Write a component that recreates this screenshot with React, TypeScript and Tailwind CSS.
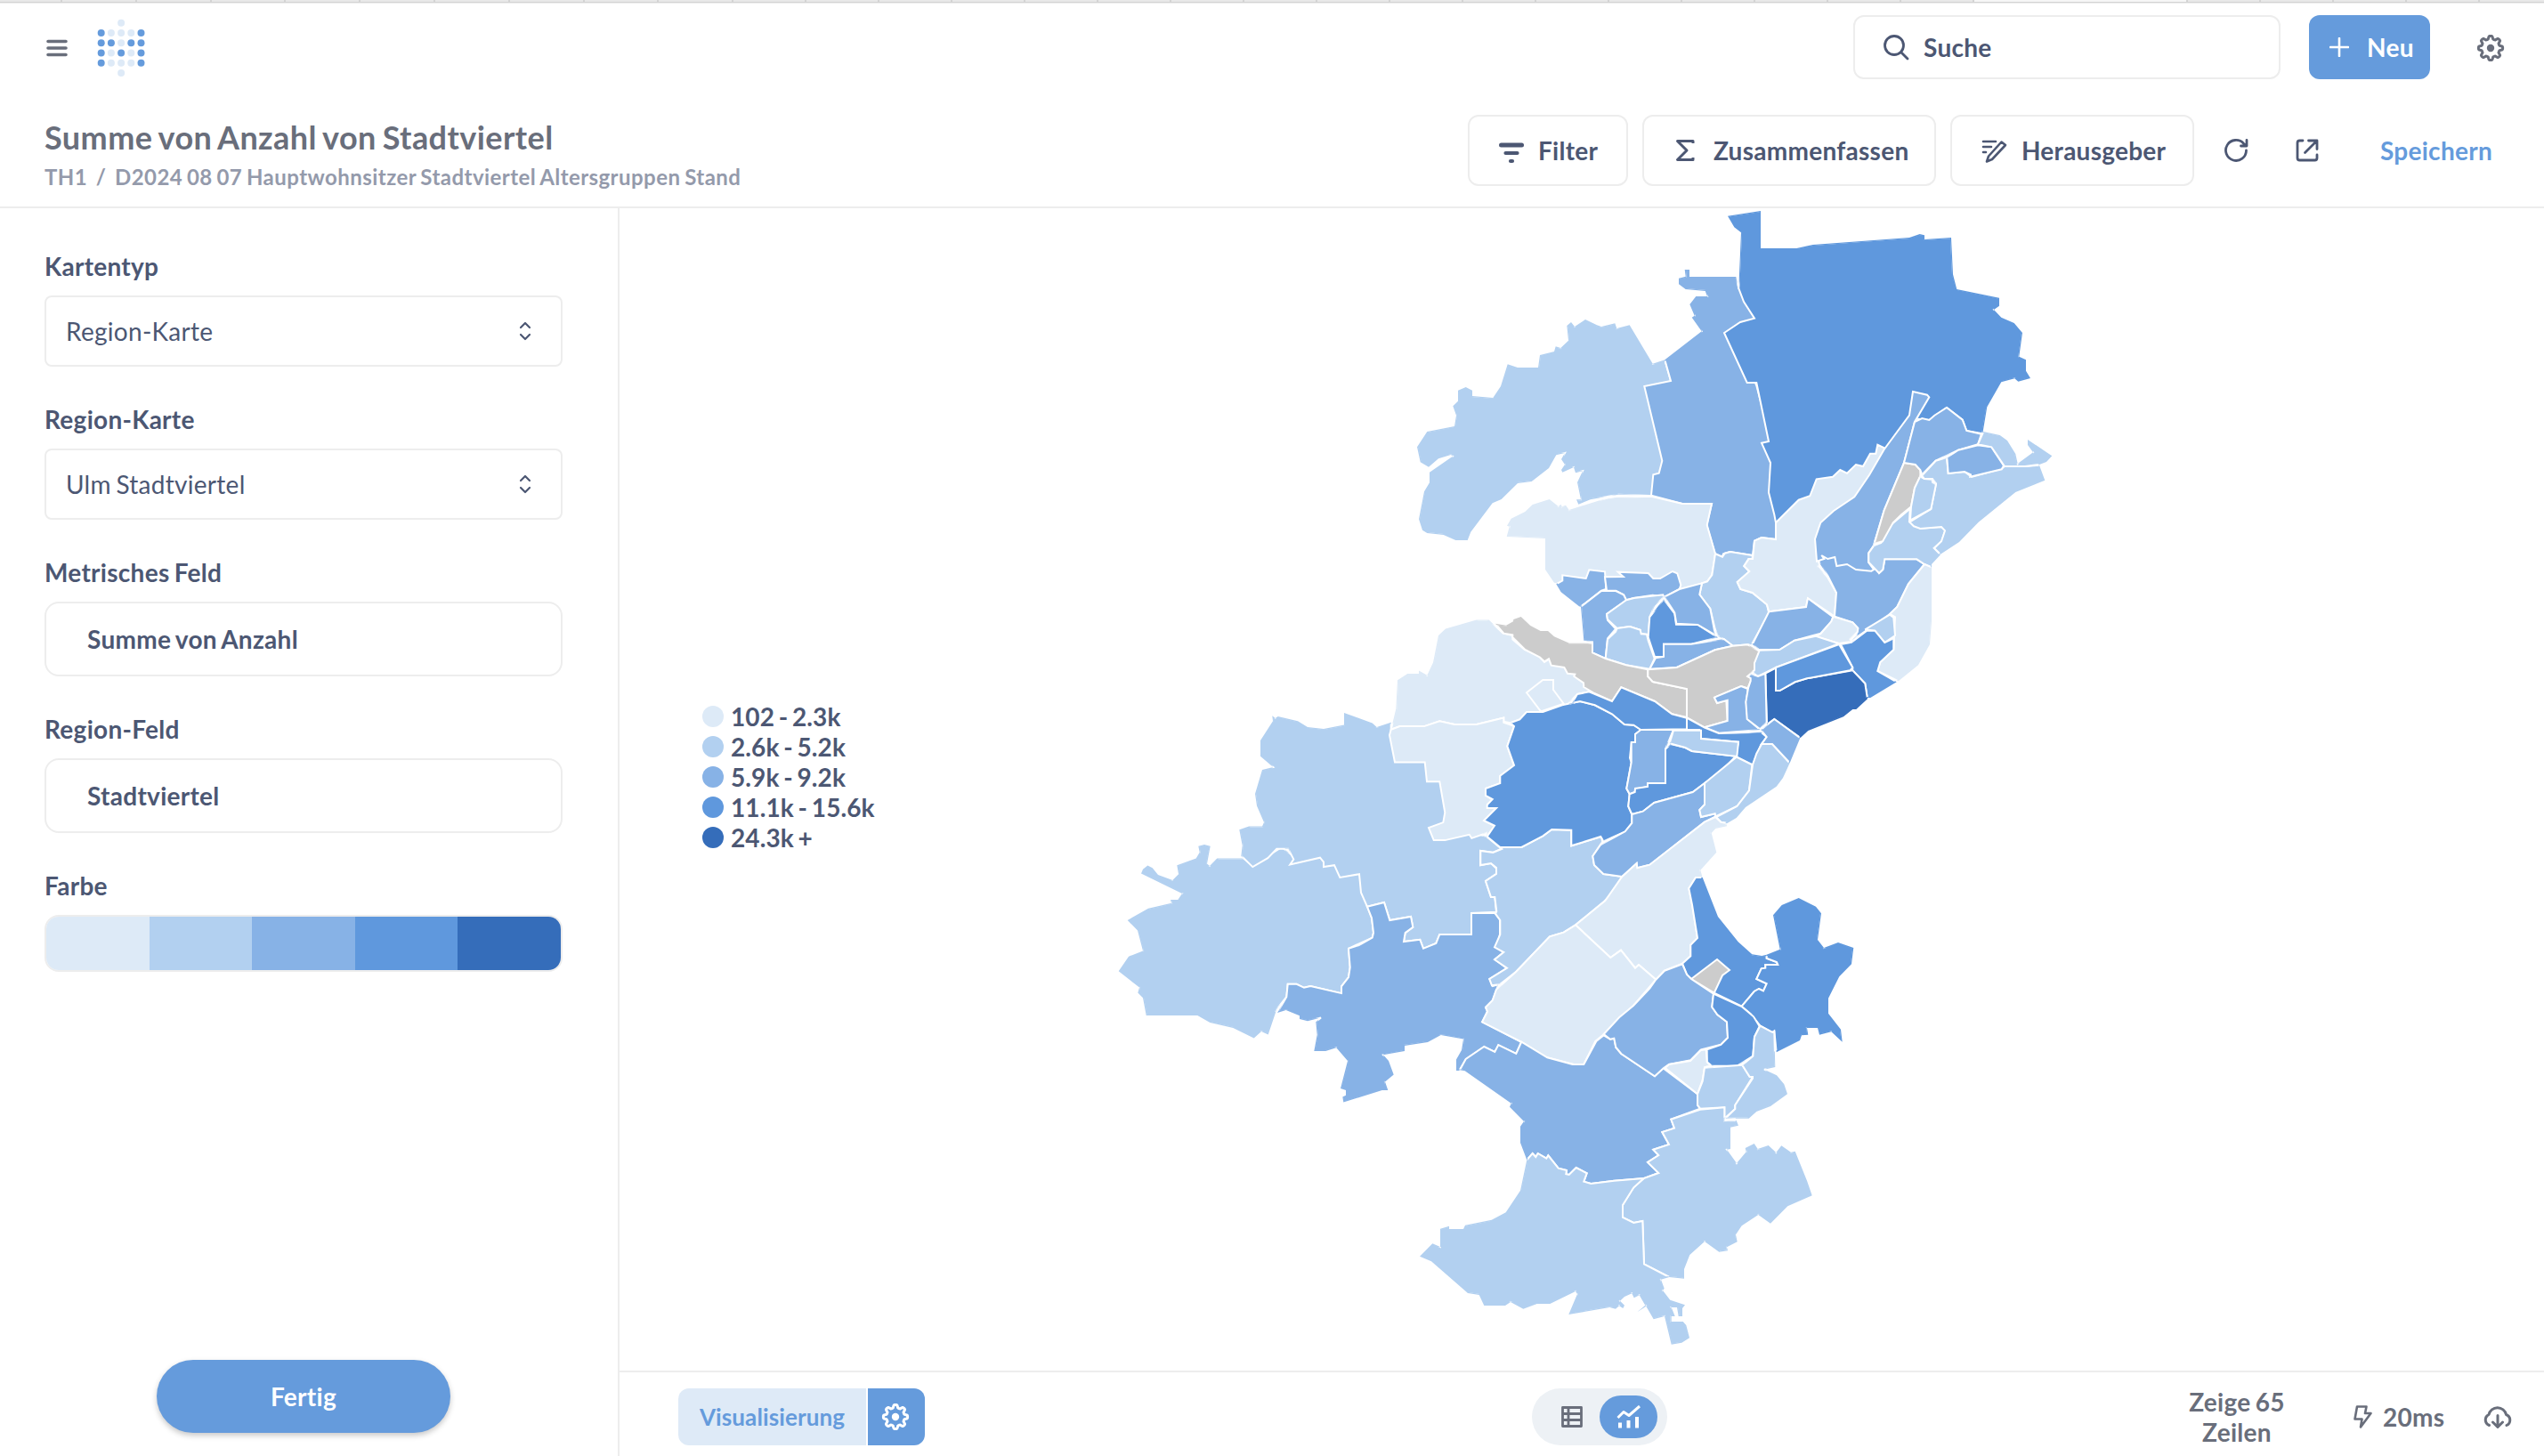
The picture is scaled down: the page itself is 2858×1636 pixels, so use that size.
import type { ReactNode } from "react";

/* ---------- Icons ---------- */

const gearPath = (() => {
  const pts: string[] = [];
  for (let i = 0; i < 96; i++) {
    const a = (i / 96) * Math.PI * 2;
    const w = Math.cos(a * 8);
    const r = 11.9 + 1.7 * Math.max(-1, Math.min(1, w * 1.7));
    pts.push(`${(16 + r * Math.sin(a)).toFixed(2)},${(16 - r * Math.cos(a)).toFixed(2)}`);
  }
  return `M${pts.join("L")}Z`;
})();

const Gear = ({ className = "" }: { className?: string }) => (
  <svg viewBox="0 0 32 32" className={`size-8 ${className}`} fill="none" stroke="currentColor" strokeWidth="3">
    <path d={gearPath} strokeLinejoin="round" />
    <circle cx="16" cy="16" r="4.2" fill="currentColor" stroke="none" />
  </svg>
);

const LOGO = ["..o..", "xooox", "xxoxx", "xoxox", "xooox", "..o.."];
const Logo = () => (
  <svg width="54" height="66" viewBox="0 0 54 66">
    {LOGO.flatMap((row, y) =>
      row.split("").map((c, x) =>
        c === "." ? null : (
          <circle key={`${x}-${y}`} cx={4.7 + x * 11.2} cy={4.7 + y * 11.25} r="4" fill={c === "x" ? "#659bdc" : "#deeaf7"} />
        ),
      ),
    )}
  </svg>
);

/* ---------- Map data ---------- */

// Each survey sheet: x/y origin of its corner and units per pixel on both axes.
const SHEETS: Record<string, [number, number, number, number]> = {
  A: [1580, 220, 3, 3],
  B: [1900, 220, 3, 3],
  C: [1680, 560, 3, 3],
  D: [1940, 560, 3, 3],
  E: [1240, 680, 3, 2.7034],
  F: [1640, 800, 3, 3],
  G: [1580, 1100, 3, 3],
};

const COLORS = ["#cccccc", "#ddeaf7", "#b2d0f0", "#87b2e6", "#5f98dd", "#356dba"];

// [colour class, outline]. A letter switches the sheet for the points that follow.
const REGIONS: [number, string][] = [
  [2, "A 36,847 70,795 162,777 168,740 157,709 174,692 174,656 200,645 222,656 222,675 292,681 318,642 341,568 375,579 444,579 450,537 498,525 503,508 520,513 546,488 541,438 555,426 567,441 603,417 642,436 657,441 703,430 709,447 752,436 830,566 871,553 891,624 860,660 880,900 840,1012 715,1007 620,1024 580,1040 573,1024 588,1024 576,966 594,928 570,934 564,915 526,932 522,924 534,906 522,888 534,867 505,874 480,918 422,963 375,969 320,1023 290,1036 217,1133 206,1161 166,1161 125,1143 70,1137 54,1127 42,1090 60,997 78,967 78,932 156,878 150,873 108,886 75,914 47,898"],
  [3, "A 938,249 954,249 954,273 1111,273 1120,312 B 200,360 230,413 150,470 220,640 270,830 290,900 285,1158 237,1152 213,1163 207,1212 130,1200 108,1207 104,1217 80,1206 52,1110 69,1038 A 930,1038 825,1010 832,940 851,935 862,893 802,642 891,624 871,553 995,457 962,410 971,404 955,366 976,339 1014,339 1007,321 941,315 918,298 918,278 941,272"],
  [4, "B 123,68 234,51 234,177 355,177 410,165 735,141 770,129 786,133 786,147 876,141 882,265 895,315 1038,344 1038,371 1020,384 1045,410 1088,429 1116,462 1105,542 1128,553 1128,590 1143,615 1102,626 1090,616 1045,628 997,712 982,802 928,792 914,755 861,714 802,756 765,752 740,800 550,1010 430,1060 285,1102 280,1075 261,1000 267,900 237,833 261,828 220,630 188,630 111,462 165,426 213,413 177,357 160,312 168,124 145,106"],
  [1, "A 338,1149 347,1115 339,1112 353,1088 400,1065 425,1041 482,1023 512,1047 521,1040 524,1048 537,1043 548,1059 680,1018 825,1013 930,1038 1029,1038 1013,1110 C 741,187 730,258 714,280 694,288 560,330 373,300 285,300 226,290 198,284 168,240 168,135"],
  [3, "C 205,289 226,277 226,259 305,270 316,241 369,247 373,306 357,311 287,365 282,364 221,316"],
  [3, "C 369,265 431,264 413,248 515,252 532,270 555,270 597,246 613,253 625,292 620,306 570,332 530,326 465,336 441,343 432,325 406,311 375,311"],
  [3, "C 288,365 357,312 406,312 432,325 441,343 375,390 378,410 405,440 378,472 371,540 327,520 327,484 298,479"],
  [2, "C 441,343 467,336 565,325 567,333 537,362 520,400 515,460 490,455 488,443 453,432 410,438 378,408 375,390"],
  [2, "C 410,438 453,432 488,443 491,457 510,458 515,480 536,540 520,575 440,562 371,540 378,475 405,450"],
  [2, "C 741,187 765,197 773,185 792,180 866,192 866,204 853,204 838,228 856,247 815,282 826,306 866,318 915,358 922,388 864,492 850,493 800,497 770,474 750,465 740,440 724,372 688,324 696,286 714,280 730,258"],
  [4, "C 567,340 604,388 609,425 682,426 750,469 660,491 567,491 567,534 537,534 515,468 520,400"],
  [3, "C 570,332 620,306 696,286 688,324 724,372 737,440 740,460 682,426 610,422 604,385"],
  [3, "C 567,491 660,491 770,474 800,497 740,511 611,570 520,575 540,538 567,534"],
  [1, "B 285,1102 362,1025 400,1012 422,955 477,947 502,924 525,935 555,906 579,912 603,869 622,869 628,839 650,850 660,870 600,1000 500,1090 440,1200 D 307,230 339,265 369,318 363,398 273,337 267,366 142,382 135,358 86,318 46,306 35,282 76,246 58,228 74,204 87,204 93,143 117,132 165,138 165,82"],
  [3, "D 309,213 330,190 500,230 513,252 526,240 532,205 640,205 666,222 612,288 574,366 549,390 420,480 436,462 442,440 424,418 363,398 369,318 340,260"],
  [3, "B 747,660 795,671 802,679 753,762 717,900 650,1060 614,1180 597,1205 597,1235 D 495,240 487,245 435,240 405,222 370,228 364,198 340,204 319,192 328,204 303,212 297,137 316,82 B 480,1062 550,1015 600,941 650,855 735,740"],
  [3, "D 142,382 267,366 273,337 358,400 352,415 316,455 228,479 178,510 108,510 86,492"],
  [1, "D 363,400 424,418 442,437 440,450 415,475 418,483 378,489 300,466 316,457 352,415 358,400"],
  [2, "D 108,512 178,510 228,479 300,464 378,490 165,570 105,600 90,590 93,552"],
  [2, "D 495,160 520,150 555,88 617,35 615,78 640,95 652,101 724,96 736,108 724,144 698,167 720,190 690,222 690,232 666,222 640,205 532,205 526,240 513,252 478,215 478,184"],
  [0, "B 717,900 755,906 772,924 772,945 753,985 741,1048 708,1075 680,1102 645,1165 617,1172 650,1060"],
  [3, "B 753,762 778,750 802,756 820,740 861,714 914,755 928,792 978,803 966,838 900,857 824,893 778,940 772,924 755,906 717,900"],
  [2, "B 778,943 824,893 861,882 866,936 921,930 945,948 1046,920 1056,912 1125,912 1173,908 1192,959 1093,999 968,1100 903,1167 840,1208 819,1188 843,1165 855,1129 843,1116 772,1122 750,1114 736,1100 808,1056 825,970 813,954 785,954"],
  [2, "B 778,950 785,954 811,956 813,966 825,972 808,1056 738,1094 741,1048 753,985 772,945"],
  [3, "B 862,882 900,857 966,841 1012,847 1053,910 1046,922 940,947 942,940 921,930 866,936"],
  [2, "B 966,838 985,795 1040,807 1065,825 1093,870 1100,903 1152,865 1134,840 1134,822 1216,877 1197,897 1173,906 1125,912 1056,912 1012,847"],
  [1, "D 666,222 690,232 690,415 684,492 645,562 578,616 508,582 517,552 562,510 567,400 549,390 574,366 612,288"],
  [2, "D 466,442 549,392 562,402 567,462 532,486 499,446"],
  [4, "D 384,492 420,485 472,446 499,446 532,486 562,472 562,510 517,552 508,582 572,619 484,672 473,672 466,624 424,580 424,570"],
  [5, "D 130,590 165,572 165,648 178,648 230,619 270,607 424,580 466,624 474,676 436,711 424,711 393,736 274,783 248,807 160,744 135,762"],
  [4, "D 165,570 378,492 424,570 415,580 270,607 230,619 178,648 165,648"],
  [1, "E 968,378 985,315 990,228 1024,208 1062,208 1062,199 1090,213 1110,174 1128,92 1152,72 1256,45 1298,45 1345,85 1377,92 1378,104 1418,135 1468,155 C 165,552 200,530 260,580 320,640 316,652 276,660 243,695 160,722 105,722 82,747 50,757 28,752 E 1348,342 1256,362 1182,362 1132,352 1080,368 998,368"],
  [0, "C 0,422 36,428 60,415 61,408 86,399 118,429 152,447 177,447 198,466 249,488 327,488 327,520 371,540 440,562 514,577 514,600 530,618 645,642 645,738 595,727 537,684 424,637 393,684 330,655 298,636 297,622 265,600 268,593 243,590 232,570 188,563 180,541 165,550 150,536 100,510 58,468 58,460 28,455"],
  [0, "C 800,497 850,493 889,515 873,555 873,578 850,600 861,606 861,615 850,640 828,633 738,671 747,690 778,680 782,750 705,772 645,738 645,642 530,618 514,600 514,577 611,570 740,511"],
  [3, "C 738,671 828,633 851,642 845,686 850,744 892,780 753,791 705,772 782,750 782,680 747,690"],
  [3, "D 70,600 82,592 105,600 130,590 134,755 112,778 68,744 64,686 72,640 80,615 80,606"],
  [1, "C 105,655 160,612 195,612 195,645 230,692 155,718 150,714"],
  [2, "E 80,957 150,921 228,905 225,895 250,895 264,876 126,815 132,802 148,791 164,798 183,819 232,835 252,817 247,790 311,769 323,751 319,732 339,727 359,732 348,785 357,792 382,769 471,769 502,790 600,735 650,770 740,765 860,810 888,916 903,950 909,995 905,1010 860,1028 825,1043 830,1100 825,1130 801,1158 801,1179 697,1157 675,1162 650,1151 620,1151 616,1190 583,1227 554,1304 531,1295 506,1315 436,1284 358,1268 316,1246 143,1246 132,1193 115,1177 120,1161 50,1112 84,1067 132,1050 114,988"],
  [2, "E 968,356 920,370 905,358 810,327 810,364 741,376 687,370 654,352 587,338 578,343 568,336 570,352 528,411 528,459 571,492 534,500 510,573 516,610 540,660 534,672 489,672 457,682 467,730 463,762 471,768 502,795 553,768 583,740 622,740 640,772 628,788 729,767 741,780 741,795 777,790 796,827 861,817 867,873 888,916 945,903 964,957 1035,946 1042,978 1016,995 1011,1022 1066,1016 1077,1043 1120,1027 1132,1000 1239,1000 1239,935 1323,932 1318,887 1305,887 1287,838 1323,816 1323,800 1305,784 1269,790 1269,746 1311,751 1340,740 1290,703 1200,680 1200,480 1040,400 968,395"],
  [3, "E 888,916 945,903 964,957 1035,946 1042,978 1016,995 1011,1022 1066,1016 1077,1043 1120,1027 1132,1000 1239,1000 1239,935 1318,935 1335,955 1335,1000 1325,1038 1348,1054 1318,1076 1358,1103 1300,1136 1311,1157 1330,1152 1325,1165 1311,1200 1287,1222 1293,1233 1276,1266 1407,1327 1390,1362 1330,1337 1318,1357 1282,1342 1220,1380 1198,1414 1188,1414 1188,1380 1206,1352 1212,1318 1136,1306 1092,1327 1014,1338 1014,1354 942,1366 960,1384 977,1426 948,1448 958,1473 938,1473 808,1510 805,1494 816,1489 816,1473 798,1468 822,1384 784,1344 748,1354 709,1354 719,1305 715,1266 732,1253 687,1263 660,1257 660,1247 614,1230 585,1238 616,1190 620,1151 650,1151 675,1162 697,1157 801,1179 801,1158 825,1130 830,1100 825,1043 860,1033 905,1010 909,995 903,950"],
  [1, "E 968,378 998,368 1080,368 1132,352 1182,362 1256,362 1348,342 1348,356 1383,368 1360,429 1383,487 1336,519 1336,542 1287,557 1287,578 1311,591 1293,605 1293,616 1323,616 1282,655 1318,671 1290,703 1290,692 1240,708 1232,697 1150,714 1112,714 1095,676 1144,660 1150,630 1132,536 1089,536 1082,477 981,477 963,395"],
  [2, "F 136,456 208,456 280,418 310,396 376,398 376,451 478,420 480,438 448,486 453,516 484,546 547,555 510,615 485,640 390,718 350,743 303,757 190,875 135,918 108,922 100,900 159,863 117,835 148,810 117,793 136,750 136,702 120,680 124,672 118,624 105,624 87,570 123,546 123,525 105,510 70,516 70,468 112,474 142,462"],
  [4, "C 50,757 82,745 105,720 160,720 225,697 285,684 335,697 393,727 435,762 466,764 492,780 F 591,75 591,102 578,105 573,155 578,170 562,258 572,277 568,318 580,345 580,375 557,403 484,436 475,420 376,451 376,398 310,396 280,418 208,456 136,456 92,420 117,383 81,366 123,324 92,324 92,313 110,294 87,282 87,258 136,240 136,215 183,180 160,115 183,48"],
  [4, "C 258,690 276,660 316,652 393,684 424,637 537,684 595,727 645,740 645,778 490,780 466,764 435,762 393,727 335,697 285,684"],
  [3, "F 591,102 591,75 610,60 720,60 693,125 693,240 633,240 633,252 591,260 590,270 572,277 562,258 578,170 578,102"],
  [4, "F 711,108 760,120 782,132 930,149 885,195 825,240 785,270 655,306 617,335 580,345 568,318 572,277 590,270 591,258 633,252 633,240 693,240 693,125"],
  [4, "F 765,20 825,53 873,72 1015,68 1034,84 1015,110 987,178 930,150 939,101 813,90 808,60 765,60"],
  [2, "F 720,62 813,62 813,90 939,101 934,150 782,132 760,120 707,106"],
  [3, "F 580,345 617,335 655,306 785,270 825,240 825,312 808,330 813,354 860,343 862,352 825,371 640,515 598,526 596,510 547,555 484,546 453,516 448,486 475,447 557,403 580,375"],
  [2, "F 825,240 932,152 985,178 975,265 934,318 862,352 860,343 813,354 808,330 825,312"],
  [2, "F 1018,107 1053,108 1112,172 1089,222 1067,251 963,321 932,357 900,376 880,371 864,354 934,318 975,265 987,178 1000,140"],
  [3, "F 1060,24 1147,88 1112,172 1053,108 1018,107 1034,84 1015,60"],
  [1, "F 547,555 596,510 598,526 640,515 825,371 862,354 880,371 897,374 900,385 862,393 848,408 865,473 811,533 818,558 795,558 772,595 783,650 801,762 778,785 778,823 750,848 690,872 661,902 603,852 591,863 543,803 508,828 390,718 490,636"],
  [1, "F 390,718 508,828 543,803 591,863 603,852 661,902 585,990 487,1085 457,1110 418,1188 385,1188 292,1164 207,1112 75,1045 93,1010 87,995 110,972 123,935 190,875 303,757 350,743"],
  [4, "F 795,558 818,558 870,690 938,775 985,817 1018,822 1034,818 1034,830 1068,843 1072,852 1030,852 1030,863 1016,865 1000,900 1034,916 1023,940 1008,933 992,942 950,992 857,947 780,900 765,885 750,848 778,823 778,785 801,762 783,650 772,595"],
  [4, "F 1034,818 1079,800 1056,685 1085,651 1142,627 1200,656 1218,679 1206,768 1227,795 1275,777 1327,795 1320,850 1279,892 1242,965 1242,1016 1284,1070 1289,1112 1252,1078 1212,1088 1206,1065 1170,1065 1174,1088 1152,1090 1146,1107 1067,1147 1060,1075 1053,1080 1012,1057 980,1018 950,992 992,942 1008,933 1023,940 1034,916 1000,900 1016,865 1030,863 1030,852 1072,852 1068,843 1034,830"],
  [0, "F 780,900 867,834 909,870 885,888 857,947"],
  [3, "G 180,307 200,270 262,228 298,246 310,222 370,252 388,212 475,265 560,288 598,288 640,210 665,190 687,203 700,200 706,230 724,252 837,328 865,301 981,388 981,425 990,437 892,473 903,503 862,516 885,558 832,575 850,594 813,618 850,654 800,672 700,680 622,690 598,683 608,655 572,636 548,660 538,658 540,645 512,638 478,595 472,605 443,588 436,600 425,588 406,610 384,552 384,497 396,480 348,431 353,419 197,310"],
  [3, "F 750,850 765,885 780,900 855,950 850,993 868,1020 900,1045 903,1098 880,1121 813,1138 778,1174 705,1188 G 867,300 837,328 724,252 706,230 700,200 687,203 665,186 F 537,1030 585,990 640,932 661,902 690,872"],
  [4, "G 1035,50 1130,93 1170,127 1190,160 1173,195 1168,260 1115,293 1030,293 1013,280 1013,238 1060,222 1083,198 1080,145 1048,120 1030,95"],
  [1, "G 872,300 885,288 957,276 992,240 1010,238 1013,280 1024,292 1005,298 998,340 981,388"],
  [2, "G 1005,299 1132,290 1157,330 1167,330 1108,425 1108,438 1072,470 1072,433 990,437 981,425 981,388 998,345"],
  [2, "G 1132,290 1168,260 1173,195 1192,158 1234,180 1240,178 1243,297 1206,305 1248,325 1273,355 1284,388 1227,429 1180,447 1154,470 1075,470 1108,438 1108,425 1167,335 1167,330 1157,330"],
  [2, "G 892,473 990,440 1072,433 1072,480 1112,477 1119,494 1092,500 1092,573 1080,575 1113,621 1145,583 1142,570 1172,555 1184,573 1220,561 1246,585 1264,562 1296,584 1310,581 1350,680 1367,730 1285,766 1227,824 1186,795 1130,832 1110,862 1115,886 1080,904 1083,916 1054,920 1005,885 955,930 936,978 936,1010 886,1005 801,961 796,816 766,822 729,804 729,762 766,703 800,672 850,654 813,618 850,594 832,575 885,558 862,516 903,503"],
  [2, "G 406,610 425,588 436,600 443,588 472,605 478,595 512,638 540,645 538,658 548,660 572,636 608,655 598,683 622,690 700,680 800,672 766,703 729,762 729,804 766,822 796,816 801,961 886,1005 858,1013 869,1043 864,1050 889,1082 939,1099 930,1110 930,1137 917,1137 912,1107 893,1107 905,1137 893,1137 893,1155 932,1155 943,1167 954,1210 928,1226 893,1232 870,1137 833,1147 808,1103 778,1123 805,1100 785,1066 767,1075 760,1060 735,1071 720,1085 735,1100 730,1110 717,1102 705,1112 685,1107 547,1131 576,1062 570,1053 484,1095 440,1095 394,1112 351,1089 333,1101 262,1101 245,1065 207,1059 84,952 45,935 88,892 114,903 114,842 144,833 144,843 192,843 198,830 287,812 335,787 384,713"],
];

function toPoints(outline: string) {
  let sheet = SHEETS.A;
  const out: string[] = [];
  for (const token of outline.split(" ")) {
    if (SHEETS[token]) {
      sheet = SHEETS[token];
      continue;
    }
    const [x, y] = token.split(",").map(Number);
    out.push(`${(sheet[0] + x / sheet[2]).toFixed(1)},${(sheet[1] + y / sheet[3]).toFixed(1)}`);
  }
  return out.join(" ");
}

const SHAPES = REGIONS.map(([c, outline]) => ({ fill: COLORS[c], points: toPoints(outline) }));

// White borders are drawn between regions only; the mask keeps them off the outer edge.
const RegionMap = () => (
  <svg className="block h-[1306px] w-[2162px]" viewBox="696 234 2162 1306">
    <defs>
      <filter id="shrink" filterUnits="userSpaceOnUse" x="696" y="234" width="2162" height="1306">
        <feMorphology operator="erode" radius="2" />
      </filter>
      <mask id="inside" maskUnits="userSpaceOnUse" x="696" y="234" width="2162" height="1306">
        <g filter="url(#shrink)">
          {SHAPES.map((s, i) => (
            <polygon key={i} points={s.points} fill="#fff" stroke="#fff" strokeWidth="2" strokeMiterlimit="3" />
          ))}
        </g>
      </mask>
    </defs>
    <g>
      {SHAPES.map((s, i) => (
        <polygon key={i} points={s.points} fill={s.fill} />
      ))}
    </g>
    <g mask="url(#inside)">
      {SHAPES.map((s, i) => (
        <polygon key={i} points={s.points} fill={s.fill} stroke="#fff" strokeWidth="2" strokeMiterlimit="3" />
      ))}
    </g>
  </svg>
);

/* ---------- Layout pieces ---------- */

const TABS_LEFT = Array.from({ length: 9 });
const TABS_MID = Array.from({ length: 17 });
const TABS_RIGHT = Array.from({ length: 4 });

const TabStrip = () => (
  <div className="flex h-1 shrink-0 border-b border-[#ececec]">
    <div className="flex h-[3px] w-full border-b border-[#d4d4d4] bg-[#e8e8e8]">
      <div className="w-[70px] shrink-0 border-r-2 border-[#d4d4d4]" />
      {TABS_LEFT.map((_, i) => (
        <div key={i} className="w-[83.8px] shrink-0 border-r-2 border-[#d4d4d4]" />
      ))}
      {TABS_MID.map((_, i) => (
        <div key={i} className="w-[82px] shrink-0 border-r-2 border-[#d4d4d4]" />
      ))}
      <div className="w-[240px] shrink-0 border-r-2 border-[#d4d4d4] bg-[#f6f6f6]" />
      {TABS_RIGHT.map((_, i) => (
        <div key={i} className="w-[82px] shrink-0 border-r-2 border-[#d4d4d4]" />
      ))}
    </div>
  </div>
);

const ToolButton = ({ width, pad, icon, gap, children }: { width: string; pad: string; icon: ReactNode; gap: string; children: ReactNode }) => (
  <button className={`flex h-20 items-center rounded-xl border-2 border-[#ededed] text-[28px] font-bold ${width} ${pad} ${gap}`}>
    {icon}
    <span>{children}</span>
  </button>
);

const Label = ({ children }: { children: ReactNode }) => (
  <div className="-mt-px h-[33px] text-[28px] leading-[32px] font-bold">{children}</div>
);

const Select = ({ children }: { children: ReactNode }) => (
  <div className="mt-4 flex h-20 items-center justify-between rounded-lg border-2 border-[#ededed] pr-[33px] pl-[22px] text-[28px]">
    <span>{children}</span>
    <svg width="14" height="22" viewBox="0 0 14 22" fill="none" stroke="currentColor" strokeWidth="2.2" strokeLinecap="round" strokeLinejoin="round">
      <path d="M2 7l5-5 5 5M2 15l5 5 5-5" />
    </svg>
  </div>
);

const Field = ({ children }: { children: ReactNode }) => (
  <div className="mt-4 flex h-[84px] items-center rounded-2xl border-2 border-[#ededed] pl-[46px] text-[28px] font-bold">{children}</div>
);

const LEGEND: [string, string][] = [
  ["bg-[#ddeaf7]", "102 - 2.3k"],
  ["bg-[#b2d0f0]", "2.6k - 5.2k"],
  ["bg-[#87b2e6]", "5.9k - 9.2k"],
  ["bg-[#5f98dd]", "11.1k - 15.6k"],
  ["bg-[#356dba]", "24.3k +"],
];

export default function App() {
  return (
    <div className="flex h-[1636px] w-[2858px] flex-col overflow-hidden bg-white font-['Lato',sans-serif] tracking-[0.28px] text-[#4c5773] [word-spacing:-1.8px]">
      <TabStrip />

      <header className="flex h-[98px] shrink-0 items-center pr-[44px] pl-[52px]">
        <svg className="mt-[2px]" width="24" height="20" viewBox="0 0 24 20" fill="none" stroke="#696e7b" strokeWidth="3.6" strokeLinecap="round">
          <path d="M2 2.5h20M2 10h20M2 17.5h20" />
        </svg>
        <div className="mt-[2px] ml-[33px]">
          <Logo />
        </div>
        <div className="ml-auto flex h-[72px] w-[480px] items-center rounded-xl border-2 border-[#ededed] pl-[31px] text-[28px] font-bold">
          <svg width="30" height="30" viewBox="0 0 30 30" fill="none" stroke="currentColor" strokeWidth="2.8" strokeLinecap="round">
            <circle cx="13" cy="13" r="10.5" />
            <path d="M21 21l7 7" />
          </svg>
          <span className="ml-[16px]">Suche</span>
        </div>
        <button className="ml-[32px] flex h-[72px] w-[136px] items-center rounded-xl bg-[#659bdc] pl-[23px] text-[28px] font-bold text-white">
          <svg width="22" height="22" viewBox="0 0 22 22" stroke="currentColor" strokeWidth="2.6" strokeLinecap="round">
            <path d="M11 1v20M1 11h20" />
          </svg>
          <span className="ml-[20px]">Neu</span>
        </button>
        <Gear className="mt-[2px] ml-[52px] text-[#696e7b]" />
      </header>

      <div className="flex h-[132px] shrink-0 items-center border-b-2 border-[#ededed] pr-[58px] pl-[50px]">
        <div>
          <h1 className="mt-[13px] text-[36px] leading-[44px] font-bold tracking-[0.43px] text-[#696e7b] [word-spacing:-2.2px]">Summe von Anzahl von Stadtviertel</h1>
          <div className="mt-[7px] text-[24px] leading-[32px] font-bold tracking-[0.45px] whitespace-pre text-[#949aab] [word-spacing:-1.5px]">
            TH1{"  "}/{"  "}D2024 08 07 Hauptwohnsitzer Stadtviertel Altersgruppen Stand
          </div>
        </div>
        <div className="mt-[4px] ml-auto flex items-center">
          <ToolButton
            width="w-[180px]"
            pad="pl-[33px]"
            gap="gap-[16px]"
            icon={
              <svg className="mt-[5px]" width="28" height="24" viewBox="0 0 28 24" stroke="currentColor" strokeWidth="4.2" strokeLinecap="round">
                <path d="M2.500 3h23" strokeWidth="5" />
                <path d="M7.500 12h13M13 21h2" />
              </svg>
            }
          >
            Filter
          </ToolButton>
          <div className="ml-4">
            <ToolButton
              width="w-[330px]"
              pad="pl-[35px]"
              gap="gap-[21px]"
              icon={
                <svg width="22" height="26" viewBox="0 0 22 26" fill="none" stroke="currentColor" strokeWidth="3" strokeLinejoin="round">
                  <path d="M20 5V2.5H2.5L13 13 2.5 23.5H20V21" />
                </svg>
              }
            >
              Zusammenfassen
            </ToolButton>
          </div>
          <div className="ml-4">
            <ToolButton
              width="w-[274px]"
              pad="pl-[33px]"
              gap="gap-[15px]"
              icon={
                <svg className="mt-[2px]" width="30" height="28" viewBox="0 0 30 28" fill="none" stroke="currentColor" strokeWidth="2.6" strokeLinecap="round" strokeLinejoin="round">
                  <path d="M2 3h14M2 9h9M2 15h3M22.5 3.5l4.5 3.5L12 23l-6 2.5L8 19.500z" />
                </svg>
              }
            >
              Herausgeber
            </ToolButton>
          </div>
          <svg className="ml-[33px]" width="28" height="28" viewBox="0 0 28 28" fill="none" stroke="currentColor" strokeWidth="2.8" strokeLinecap="round" strokeLinejoin="round">
            <path d="M25.500 14A11.500 11.500 0 1 1 22.500 6.200L25.500 9M26 2.500V9H19.500" />
          </svg>
          <svg className="ml-[53px]" width="26" height="26" viewBox="0 0 26 26" fill="none" stroke="currentColor" strokeWidth="2.8" strokeLinecap="round" strokeLinejoin="round">
            <path d="M8 2H4.500A2.500 2.500 0 0 0 2 4.500V21.500A2.500 2.500 0 0 0 4.500 24H21.500A2.500 2.500 0 0 0 24 21.500V18M14.500 2H24V11.500M24 2L10.500 15.500" />
          </svg>
          <button className="ml-[69px] text-[28px] font-bold text-[#659bdc]">Speichern</button>
        </div>
      </div>

      <div className="flex min-h-0 flex-1">
        <aside className="flex w-[696px] shrink-0 flex-col border-r-2 border-[#ededed] pr-[62px] pl-[50px]">
          <div className="mt-[50px]">
            <Label>Kartentyp</Label>
            <Select>Region-Karte</Select>
          </div>
          <div className="mt-[44px]">
            <Label>Region-Karte</Label>
            <Select>Ulm Stadtviertel</Select>
          </div>
          <div className="mt-[44px]">
            <Label>Metrisches Feld</Label>
            <Field>Summe von Anzahl</Field>
          </div>
          <div className="mt-[44px]">
            <Label>Region-Feld</Label>
            <Field>Stadtviertel</Field>
          </div>
          <div className="mt-[44px]">
            <Label>Farbe</Label>
            <div className="mt-4 flex h-16 overflow-hidden rounded-2xl border-2 border-[#ededed]">
              <div className="flex-1 bg-[#ddeaf7]" />
              <div className="flex-1 bg-[#b2d0f0]" />
              <div className="flex-1 bg-[#87b2e6]" />
              <div className="flex-1 bg-[#5f98dd]" />
              <div className="flex-1 bg-[#356dba]" />
            </div>
          </div>
          <button className="mt-auto mb-[26px] h-[82px] w-[330px] self-center rounded-full bg-[#659bdc] text-[28px] font-bold text-white shadow-[0_3px_6px_rgba(0,0,0,0.22)]">
            Fertig
          </button>
        </aside>

        <main className="flex min-w-0 flex-1 flex-col">
          <div className="relative h-[1306px] shrink-0">
            <RegionMap />
            <ul className="absolute top-[554px] left-[93px]">
              {LEGEND.map(([color, text]) => (
                <li key={text} className="flex h-[34px] items-center gap-2 text-[28px] font-bold tracking-[0.1px] [word-spacing:-2.2px]">
                  <span className={`size-6 rounded-full ${color}`} />
                  {text}
                </li>
              ))}
            </ul>
          </div>

          <footer className="flex flex-1 items-start border-t-2 border-[#ededed] pt-[18px] pr-[35px] pl-[66px] text-[#696e7b]">
            <div className="flex h-16 gap-[2px] overflow-hidden rounded-xl text-[26px] font-bold">
              <div className="flex w-[211px] items-center justify-center bg-[#deeaf7] tracking-[0.1px] text-[#659bdc]">Visualisierung</div>
              <div className="flex w-[64px] items-center justify-center bg-[#659bdc] pr-[2px] text-white">
                <Gear />
              </div>
            </div>

            <div className="ml-[682px] flex h-16 w-[152px] items-center rounded-full bg-[#edf1f5] pl-[33px]">
              <svg width="24" height="24" viewBox="0 0 24 24" fill="none" stroke="currentColor" strokeWidth="2.8" strokeLinejoin="round">
                <path d="M1.500 1.500H22.500V22.500H1.500ZM1.500 8.500H22.500M1.500 15.500H22.500M8 1.500V22.500" />
              </svg>
              <div className="ml-[19px] flex h-12 w-[65px] items-center justify-center rounded-full bg-[#659bdc] text-white">
                <svg width="28" height="26" viewBox="0 0 28 26" fill="none" stroke="currentColor" strokeWidth="3">
                  <path d="M1.500 14L8 7.500L14 11.500L26 1" strokeLinejoin="round" />
                  <path d="M4 19.500V25.500M13.500 17V25.500M23 13V25.500" strokeWidth="4" />
                </svg>
              </div>
            </div>

            <div className="-mt-[2px] ml-[567px] w-[146px] text-center text-[28px] leading-[34px] font-bold">
              Zeige 65
              <br />
              Zeilen
            </div>
            <div className="ml-[57px] flex h-16 items-center text-[28px] font-bold">
              <svg width="22" height="26" viewBox="0 0 22 26" fill="none" stroke="currentColor" strokeWidth="2.600" strokeLinejoin="round">
                <path d="M5 1.500H15.500L14 9H20.500L9 24.500L10.500 15.500H2.500Z" />
              </svg>
              <span className="ml-[12px]">20ms</span>
            </div>
            <svg className="mt-[18px] ml-auto" width="34" height="28" viewBox="0 0 34 28" fill="none" stroke="currentColor" strokeWidth="3" strokeLinecap="round" strokeLinejoin="round">
              <path d="M7.500 23.500A6.500 6.500 0 0 1 7 11.500A10 10 0 0 1 26.500 11.500A6.500 6.500 0 0 1 27 23.500M17 12.500V25M11.500 20L17 25.500L22.500 20" />
            </svg>
          </footer>
        </main>
      </div>
    </div>
  );
}
